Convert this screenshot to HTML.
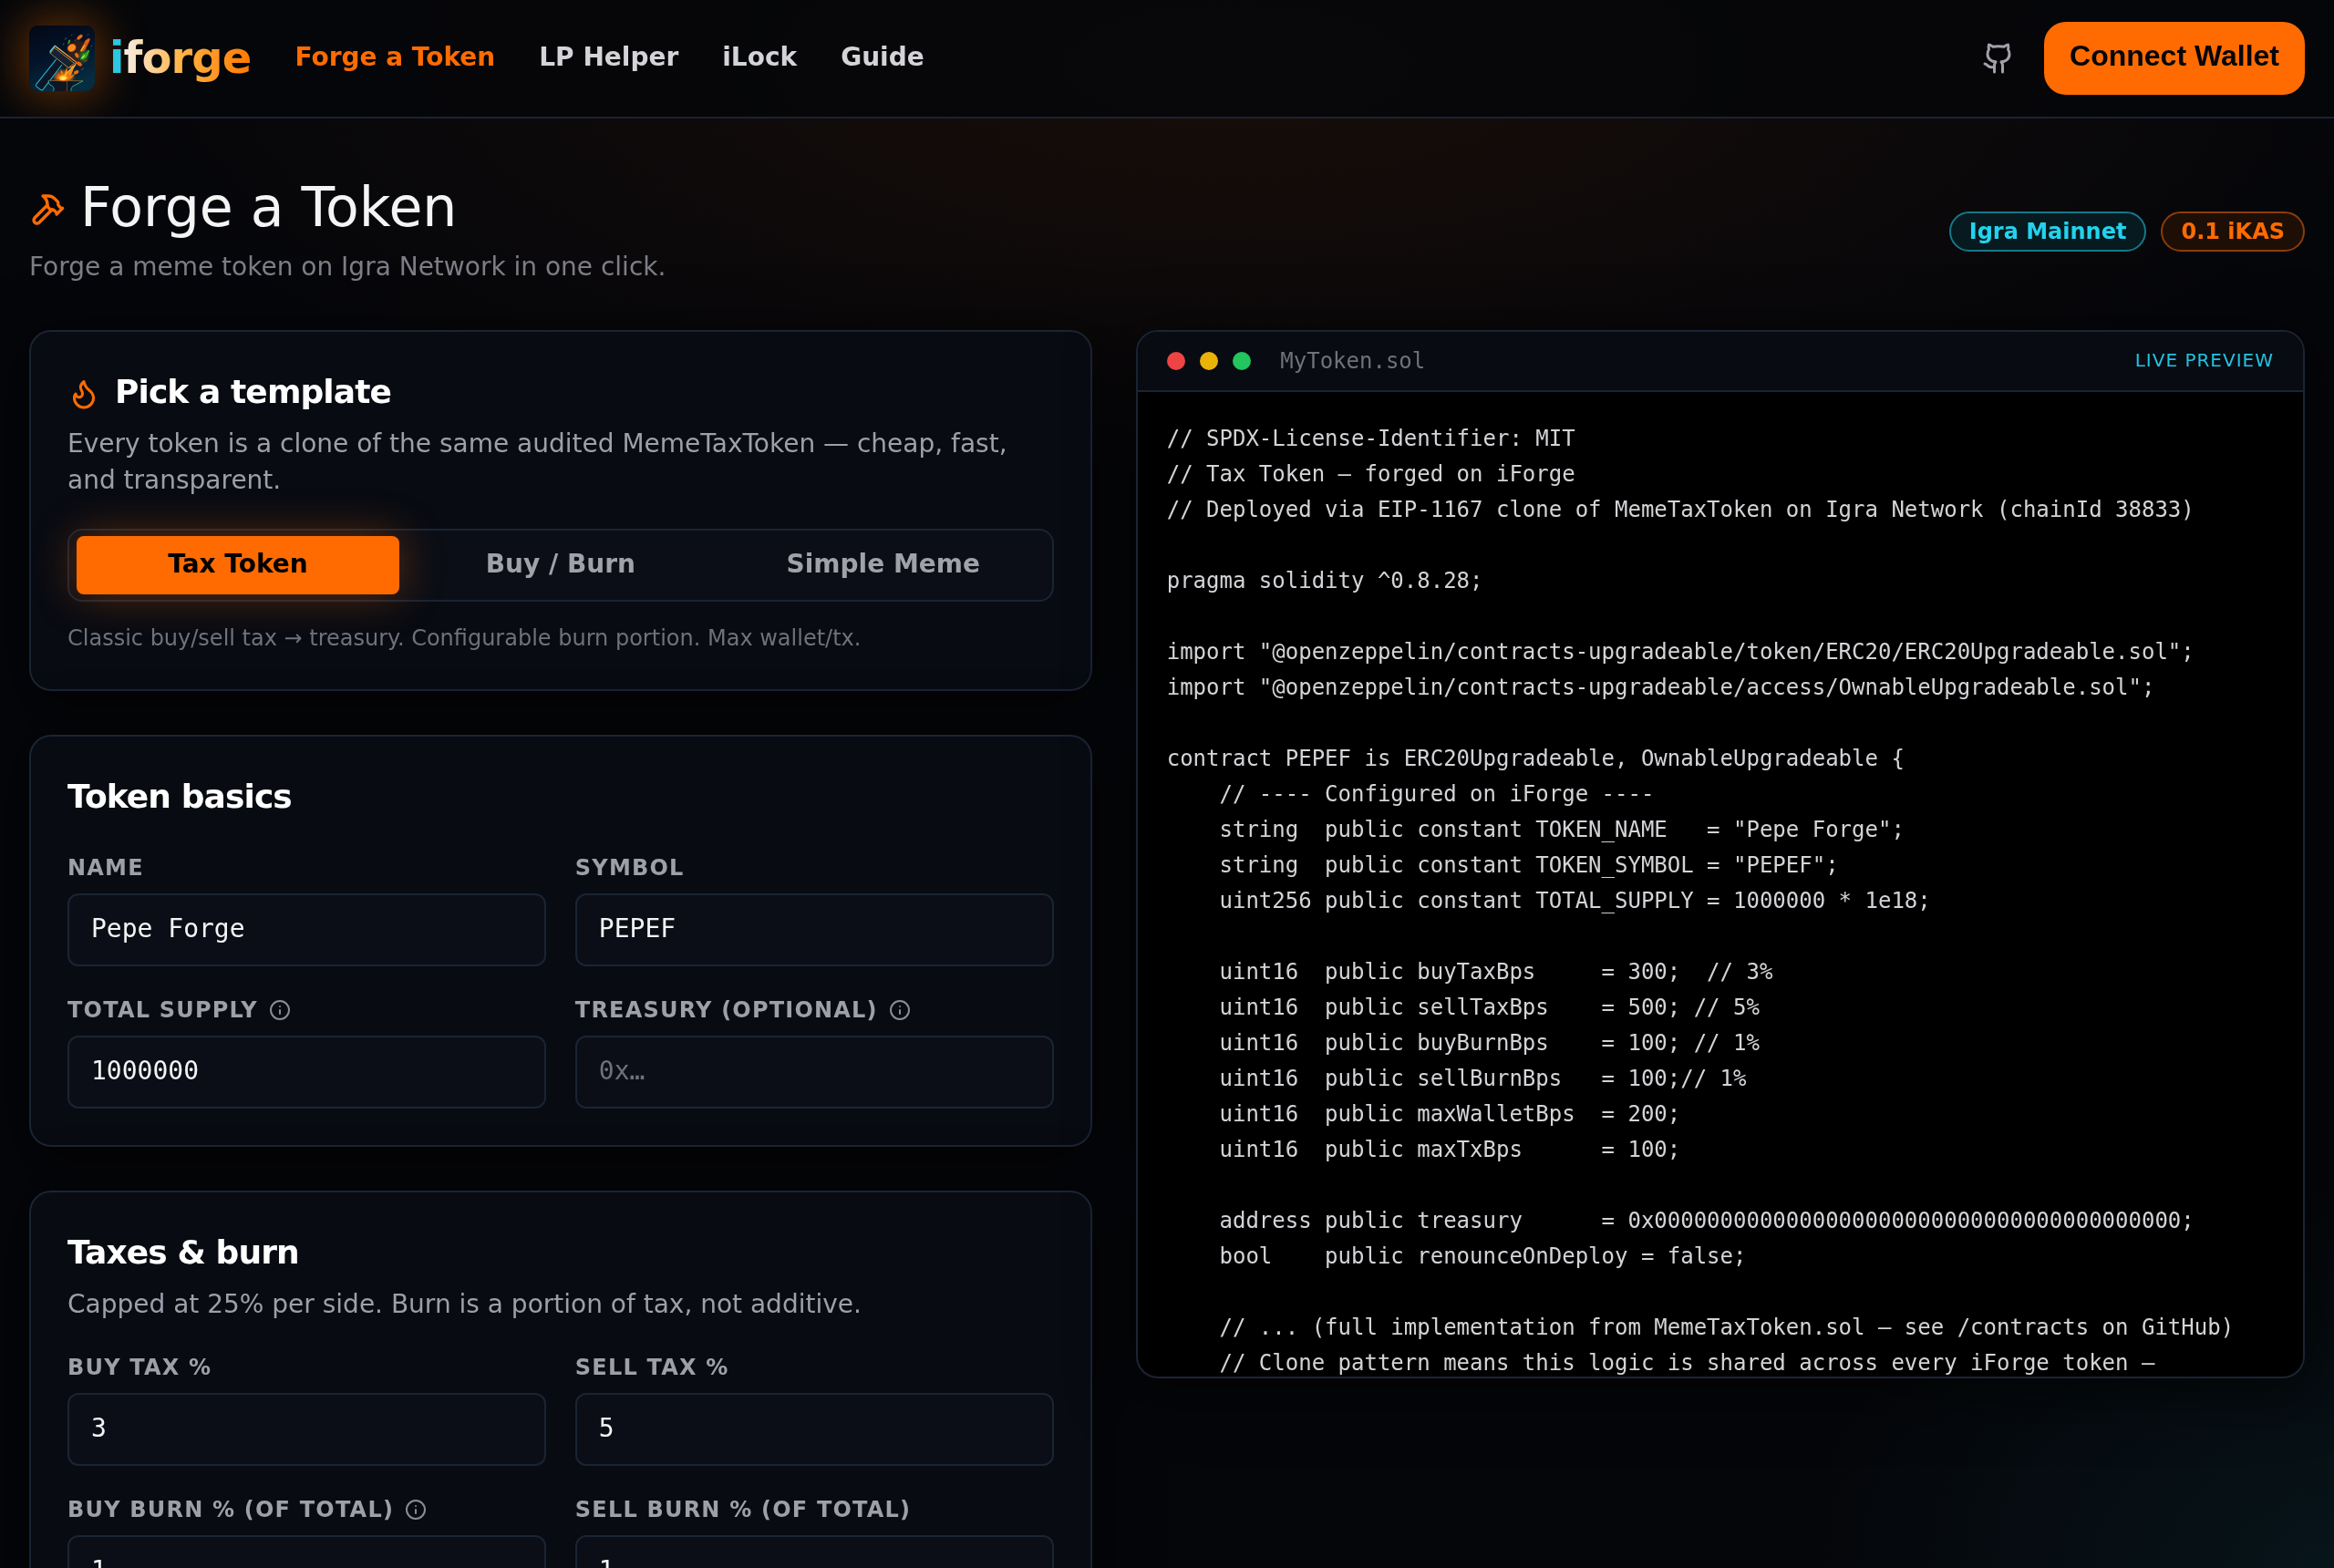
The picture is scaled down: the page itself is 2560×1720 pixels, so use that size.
<!DOCTYPE html>
<html lang="en">
<head>
<meta charset="utf-8">
<title>iForge — Forge a Token</title>
<style>
*{box-sizing:border-box;margin:0;padding:0}
html{background:#05060a;overflow:hidden}
:root{--brand:-.5px;--nav:-.5px;--h1:-.5px;--h2:0px;--cwpb:1px;--lp:.5px;--t14:0px}
@media (min-width:2000px){html{zoom:2}:root{--brand:-.5px;--nav:-.5px;--h1:-1.5px;--h2:-1.25px;--cwpb:3px;--lp:-.5px;--t14:-.5px}}
body{-webkit-font-smoothing:antialiased;width:1280px;height:860px;overflow:hidden;position:relative;background:#05060a;color:#f4f4f5;
 font-family:"DejaVu Sans","Liberation Sans",sans-serif;font-size:16px;line-height:24px}
.bgfx{position:absolute;inset:0;pointer-events:none;
 background:
  radial-gradient(ellipse 640px 230px at 53% 36px, rgba(255,107,0,.078) 0%, rgba(255,107,0,.052) 35%, rgba(255,107,0,.022) 68%, transparent 100%),
  radial-gradient(ellipse 420px 300px at 100% 100%, rgba(34,211,238,.07), transparent 70%);}
header{will-change:transform;overflow:hidden;position:absolute;left:0;top:0;width:1280px;height:65px;border-bottom:1px solid #1c2233;background:rgba(5,6,10,.82)}
.hin{width:1280px;padding:0 16px;height:64px;display:flex;align-items:center;justify-content:space-between}
.hl{display:flex;align-items:center}
.logo{width:36px;height:36px;border-radius:5px;display:block;box-shadow:0 0 24px 4px rgba(255,120,0,.35)}
.brand{font-weight:700;font-size:24px;line-height:32px;margin-left:8px;letter-spacing:-.46px;position:relative;top:var(--brand)}
.brand .i{color:#2ac8e2}
.brand .f{background:linear-gradient(90deg,#f6eee4 0%,#ffb347 45%,#ff7a00 100%);-webkit-background-clip:text;background-clip:text;color:transparent}
nav{position:relative;top:var(--nav);display:flex;margin-left:24px;font-size:14px;line-height:20px;font-weight:700}
nav a{color:#d4d4d8;margin-right:24px;text-decoration:none}
nav a.on{color:#ff6b00}
.hr{display:flex;align-items:center}
.gh{width:18px;height:18px;color:#a1a1aa;margin-right:16px;display:block}
.cw{font-family:"Liberation Sans",sans-serif;font-weight:700;font-size:16px;line-height:24px;color:#05060a;background:#ff6b00;border:0;border-radius:12px;height:40px;padding:0 14px var(--cwpb)}
main{will-change:transform;position:absolute;left:0;top:65px;width:1280px;padding:32px 16px 0}
.th{display:flex;justify-content:space-between;align-items:flex-end;margin-bottom:24px}
h1{font-size:30px;line-height:36px;font-weight:400;display:flex;align-items:center}
h1 span{position:relative;top:var(--h1)}
h1 svg{width:20px;height:20px;color:#ff6b00;margin-right:8px}
.sub{position:relative;top:var(--t14);font-size:14px;line-height:20px;color:#7d7d86;margin-top:4px}
.badges{display:flex;gap:8px;padding-bottom:19px}
.bd{font-size:12px;line-height:16px;font-weight:700;border-radius:999px;padding:2px 10px;border:1px solid}
.bd.c{color:#22d3ee;border-color:#15788a;background:#061a20}
.bd.o{color:#ff6b00;border-color:#8a3d08;background:#1d0f06}
.grid{display:grid;grid-template-columns:1fr 1.1fr;gap:24px;align-items:start}
.card{border:1px solid #1b2433;border-radius:12px;background:#080b12;box-shadow:0 6px 30px 6px rgba(0,0,0,.5);padding:20px;margin-bottom:24px}
h2{font-size:18px;line-height:28px;font-weight:700;color:#fff;letter-spacing:-.45px;display:flex;align-items:center}
h2 span{position:relative;top:var(--h2)}
h2 svg{width:18px;height:18px;color:#ff6b00;margin-right:8px}
.desc{position:relative;top:var(--t14);font-size:14px;line-height:20px;color:#9d9fa9;margin-top:4px}
.seg{margin-top:16px;border:1px solid #1b2433;border-radius:8px;padding:3px 4px;display:grid;grid-template-columns:1fr 1fr 1fr;background:#0b0e16}
.seg div{height:32px;line-height:calc(32px + 2*var(--t14));text-align:center;font-size:14px;font-weight:700;color:#a1a1aa;border-radius:4px}
.seg div.on{background:#ff6b00;color:#000;box-shadow:0 0 24px rgba(255,107,0,.35)}
.hint{font-size:12px;line-height:16px;color:#6f717c;margin-top:12px}
.fg{display:grid;grid-template-columns:1fr 1fr;column-gap:16px;row-gap:16px;margin-top:16px}
label{display:flex;align-items:center;font-size:12px;line-height:16px;font-weight:700;letter-spacing:.6px;color:#9d9fa9;text-transform:uppercase}
label svg{width:12px;height:12px;margin-left:6px;color:#8a8c96}
.in{margin-top:6px;height:40px;border:1px solid #1b2433;border-radius:6px;background:#0b0e16;padding:0 12px;font-family:"DejaVu Sans Mono","Liberation Mono",monospace;font-size:14px;line-height:calc(38px + 2*var(--t14));color:#f4f4f5}
.in.ph{color:#6f717c}
.code{border:1px solid #1b2433;border-radius:12px;background:#000;box-shadow:0 6px 30px 6px rgba(0,0,0,.5);overflow:hidden;height:575px}
.cbar{height:33px;border-bottom:1px solid #1b2433;background:#080b12;display:flex;align-items:center;padding:0 16px;justify-content:space-between}
.dots{display:flex;align-items:center}
.dots i{width:10px;height:10px;border-radius:50%;display:block;margin-right:8px}
.fn{font-family:"DejaVu Sans Mono","Liberation Mono",monospace;font-size:12px;line-height:16px;color:#6f717c;margin-left:8.3px}
.lp{position:relative;top:var(--lp);font-size:10px;line-height:15px;letter-spacing:.5px;color:#22c3e0;text-transform:uppercase}
pre{font-family:"DejaVu Sans Mono","Liberation Mono",monospace;font-size:12px;line-height:19.5px;color:#d4d4d8;padding:16px;white-space:pre}
</style>
</head>
<body>
<div class="bgfx"></div>
<header><div class="hin">
 <div class="hl">
  <svg class="logo" viewBox="0 0 72 72"><defs><linearGradient id="lgbg" x1="0" y1="0" x2="0.35" y2="1"><stop offset="0" stop-color="#030716"/><stop offset=".55" stop-color="#04142a"/><stop offset="1" stop-color="#062c40"/></linearGradient><radialGradient id="lgsp" cx=".5" cy=".5" r=".5"><stop offset="0" stop-color="#fff27a"/><stop offset=".35" stop-color="#ffb21e"/><stop offset=".7" stop-color="#f2620c" stop-opacity=".75"/><stop offset="1" stop-color="#c43c06" stop-opacity="0"/></radialGradient><linearGradient id="lghd" x1="0" y1="0" x2="1" y2="0"><stop offset="0" stop-color="#3cc0d8"/><stop offset=".3" stop-color="#f0c060"/><stop offset="1" stop-color="#ff7a14"/></linearGradient><filter id="lgb" x="-20%" y="-20%" width="140%" height="140%"><feGaussianBlur stdDeviation=".55"/></filter><filter id="lgb2" x="-30%" y="-30%" width="160%" height="160%"><feGaussianBlur stdDeviation="1.6"/></filter><clipPath id="lgc"><rect width="72" height="72"/></clipPath></defs><g clip-path="url(#lgc)"><rect width="72" height="72" fill="url(#lgbg)"/><g filter="url(#lgb2)" opacity=".55"> <ellipse cx="38" cy="56" rx="11" ry="7" fill="#ff8a10"/> <ellipse cx="53" cy="30" rx="11" ry="14" fill="#a63a06" opacity=".5"/> <ellipse cx="60" cy="33" rx="5" ry="6" fill="#2f9a1c"/></g><g filter="url(#lgb)"> <!-- handle --> <path d="M29.6 37.2 7.9 64.4a2 2 0 0 0 .3 2.7l4.3 3.3a2 2 0 0 0 2.7-.3L35.9 43" fill="#081428" stroke="#2bb3d2" stroke-width="1.05" stroke-linejoin="round"/> <!-- head --> <path d="M28.3 22.2 51.7 40.3 50 44 43.5 46.2 23.3 30.4 23 28.5Z" fill="#0c1829" stroke="url(#lghd)" stroke-width="1.2" stroke-linejoin="round"/> <path d="M23.3 30.4 43.5 46.2 49.6 41.4 27.6 24.3Z" fill="#182233" stroke="none"/><path d="M27.6 24.3 49.6 41.4M27.6 24.3 23.3 30.4M49.6 41.4 43.5 46.2" fill="none" stroke="#f0a848" stroke-width=".75" stroke-linejoin="round"/> <path d="M23 28.5 28.3 22.2" stroke="#49c6d8" stroke-width="1.1" fill="none"/> <!-- anvil --> <path d="M21 60.3 59 60.8 48 66.5 46 69 46.5 72 26 72 27.5 68 25 65.5 22 64Z" fill="#0a1420"/> <path d="M21 60.3 59 60.8" stroke="#8a6a3a" stroke-width=".9"/> <path d="M21 60.3 22 64c1 2 3.5 1.5 4.5 3.5s1 3.5-.5 4.5" fill="none" stroke="#2bb3d2" stroke-width=".9"/> <path d="M59 60.8 48 66.5c-1.5 1-2.5 3-2 5.5" fill="none" stroke="#2ab89a" stroke-width=".9"/> <path d="M41.5 61 41.3 72" stroke="#7a4a22" stroke-width=".9"/> <!-- spark burst --> <path d="M35.5 59 34.5 47.5 38 54 41.5 45.5 41.8 54 51.5 41.5 45 56 51 52.5 44.5 59.5Z" fill="#ff8a12"/> <path d="M30.5 58.8 32 52 34 57 37 50 38 57.5Z" fill="#f26a0c"/> <ellipse cx="37.5" cy="57" rx="9" ry="5.2" fill="url(#lgsp)"/> <path d="M36 58 50 43.5" stroke="#ffb624" stroke-width="1.6" stroke-linecap="round"/> <ellipse cx="37" cy="58" rx="3.6" ry="1.9" fill="#ffe95a"/> <!-- coins --> <ellipse cx="46.7" cy="24.5" rx="5" ry="4.2" transform="rotate(-35 46.7 24.5)" fill="#e8660e"/> <ellipse cx="46.7" cy="24.5" rx="3.3" ry="2.6" transform="rotate(-35 46.7 24.5)" fill="#f58a1a" stroke="#ffb040" stroke-width=".6"/> <ellipse cx="55.5" cy="12.7" rx="3.7" ry="1.9" transform="rotate(-42 55.5 12.7)" fill="#ea6a10"/> <ellipse cx="59.2" cy="26.2" rx="3.4" ry="1.5" transform="rotate(-35 59.2 26.2)" fill="#e8640e" stroke="#b84a08" stroke-width=".4"/><ellipse cx="60.4" cy="23.8" rx="3.4" ry="1.5" transform="rotate(-35 60.4 23.8)" fill="#e8640e" stroke="#b84a08" stroke-width=".4"/><ellipse cx="61.6" cy="21.4" rx="3.4" ry="1.5" transform="rotate(-35 61.6 21.4)" fill="#e8640e" stroke="#b84a08" stroke-width=".4"/><ellipse cx="62.8" cy="19" rx="3.4" ry="1.5" transform="rotate(-35 62.8 19)" fill="#e8640e" stroke="#b84a08" stroke-width=".4"/><ellipse cx="63.8" cy="16.8" rx="3.4" ry="1.5" transform="rotate(-35 63.8 16.8)" fill="#e8640e" stroke="#b84a08" stroke-width=".4"/> <path d="M57 27.5 60.5 22" stroke="#ffc234" stroke-width="1.2" stroke-linecap="round"/> <ellipse cx="52.3" cy="32.7" rx="1.9" ry="3" transform="rotate(-25 52.3 32.7)" fill="#e06a12"/> <ellipse cx="55" cy="42.2" rx="3.2" ry="2" transform="rotate(35 55 42.2)" fill="#e4620e"/> <ellipse cx="51.7" cy="51.2" rx="2.9" ry="1.9" transform="rotate(-25 51.7 51.2)" fill="#ea6e10"/> <path d="M60.5 39.5 63.5 38M57.5 48.5 59.5 47" stroke="#b0481a" stroke-width=".9" stroke-linecap="round"/> <!-- green shards --> <path d="M42 20.5 43.5 16 45.5 15.5 44.2 19.5Z" fill="#3fae28"/> <path d="M56 37 59 31 62 30.5 64.5 27 66.5 27.5 64 33 62.5 35.5 59 37.5Z" fill="#36a822"/> <path d="M58 35.5 60.5 33.2" stroke="#b6ee4a" stroke-width="1.2" stroke-linecap="round"/> <path d="M39.5 15.5 40.5 13.5M46 11 47 10M64 10.5 65 9.5M68 23 68.8 22M37.5 21 38 19.5M50.5 16.5 51 15.5" stroke="#5a7a4a" stroke-width=".7" stroke-linecap="round"/></g></g></svg>
  <span class="brand"><span class="i">i</span><span class="f">forge</span></span>
  <nav><a class="on">Forge a Token</a><a>LP Helper</a><a>iLock</a><a>Guide</a></nav>
 </div>
 <div class="hr">
  <svg class="gh" viewBox="0 0 24 24" fill="none" stroke="currentColor" stroke-width="2" stroke-linecap="round" stroke-linejoin="round"><path d="M15 22v-4a4.8 4.8 0 0 0-1-3.5c3 0 6-2 6-5.5.08-1.25-.27-2.48-1-3.5.28-1.15.28-2.35 0-3.5 0 0-1 0-3 1.5-2.64-.5-5.36-.5-8 0C6 2 5 2 5 2c-.3 1.15-.3 2.35 0 3.5A5.403 5.403 0 0 0 4 9c0 3.5 3 5.5 6 5.5-.39.49-.68 1.05-.85 1.65-.17.6-.22 1.23-.15 1.85v4"/><path d="M9 18c-4.510 2-5-2-7-2"/></svg>
  <button class="cw">Connect Wallet</button>
 </div>
</div></header>
<main>
 <div class="th">
  <div>
   <h1><svg viewBox="0 0 24 24" fill="none" stroke="currentColor" stroke-width="2" stroke-linecap="round" stroke-linejoin="round"><path d="m15 12-8.373 8.373a1 1 0 1 1-3-3L12 9"/><path d="m18 15 4-4"/><path d="m21.5 11.5-1.914-1.914A2 2 0 0 1 19 8.172V7l-2.26-2.26a6 6 0 0 0-4.202-1.756L9 2.96l.92.82A6.18 6.18 0 0 1 12 8.4V10l2 2h1.172a2 2 0 0 1 1.414.586L18.5 14.5"/></svg><span>Forge a Token</span></h1>
   <div class="sub">Forge a meme token on Igra Network in one click.</div>
  </div>
  <div class="badges"><span class="bd c">Igra Mainnet</span><span class="bd o">0.1 iKAS</span></div>
 </div>
 <div class="grid">
  <div>
   <div class="card">
    <h2><svg viewBox="0 0 24 24" fill="none" stroke="currentColor" stroke-width="2" stroke-linecap="round" stroke-linejoin="round"><path d="M8.5 14.5A2.5 2.5 0 0 0 11 12c0-1.38-.5-2-1-3-1.072-2.143-.224-4.054 2-6 .5 2.5 2 4.9 4 6.5 2 1.6 3 3.5 3 5.5a7 7 0 1 1-14 0c0-1.153.433-2.294 1-3a2.5 2.5 0 0 0 2.5 2.5z"/></svg><span>Pick a template</span></h2>
    <div class="desc">Every token is a clone of the same audited MemeTaxToken — cheap, fast, and transparent.</div>
    <div class="seg"><div class="on">Tax Token</div><div>Buy / Burn</div><div>Simple Meme</div></div>
    <div class="hint">Classic buy/sell tax → treasury. Configurable burn portion. Max wallet/tx.</div>
   </div>
   <div class="card">
    <h2><span>Token basics</span></h2>
    <div class="fg">
     <div><label>Name</label><div class="in">Pepe Forge</div></div>
     <div><label>Symbol</label><div class="in">PEPEF</div></div>
     <div><label>Total supply<svg viewBox="0 0 24 24" fill="none" stroke="currentColor" stroke-width="2" stroke-linecap="round" stroke-linejoin="round"><circle cx="12" cy="12" r="10"/><path d="M12 16v-4"/><path d="M12 8h.01"/></svg></label><div class="in">1000000</div></div>
     <div><label>Treasury (optional)<svg viewBox="0 0 24 24" fill="none" stroke="currentColor" stroke-width="2" stroke-linecap="round" stroke-linejoin="round"><circle cx="12" cy="12" r="10"/><path d="M12 16v-4"/><path d="M12 8h.01"/></svg></label><div class="in ph">0x…</div></div>
    </div>
   </div>
   <div class="card">
    <h2><span>Taxes &amp; burn</span></h2>
    <div class="desc">Capped at 25% per side. Burn is a portion of tax, not additive.</div>
    <div class="fg">
     <div><label>Buy tax %</label><div class="in">3</div></div>
     <div><label>Sell tax %</label><div class="in">5</div></div>
     <div><label>Buy burn % (of total)<svg viewBox="0 0 24 24" fill="none" stroke="currentColor" stroke-width="2" stroke-linecap="round" stroke-linejoin="round"><circle cx="12" cy="12" r="10"/><path d="M12 16v-4"/><path d="M12 8h.01"/></svg></label><div class="in">1</div></div>
     <div><label>Sell burn % (of total)</label><div class="in">1</div></div>
    </div>
   </div>
  </div>
  <div class="code">
   <div class="cbar"><div class="dots"><i style="background:#ef4444"></i><i style="background:#eab308"></i><i style="background:#22c55e"></i><span class="fn">MyToken.sol</span></div><span class="lp">Live preview</span></div>
<pre>// SPDX-License-Identifier: MIT
// Tax Token — forged on iForge
// Deployed via EIP-1167 clone of MemeTaxToken on Igra Network (chainId 38833)

pragma solidity ^0.8.28;

import "@openzeppelin/contracts-upgradeable/token/ERC20/ERC20Upgradeable.sol";
import "@openzeppelin/contracts-upgradeable/access/OwnableUpgradeable.sol";

contract PEPEF is ERC20Upgradeable, OwnableUpgradeable {
    // ---- Configured on iForge ----
    string  public constant TOKEN_NAME   = "Pepe Forge";
    string  public constant TOKEN_SYMBOL = "PEPEF";
    uint256 public constant TOTAL_SUPPLY = 1000000 * 1e18;

    uint16  public buyTaxBps     = 300;  // 3%
    uint16  public sellTaxBps    = 500; // 5%
    uint16  public buyBurnBps    = 100; // 1%
    uint16  public sellBurnBps   = 100;// 1%
    uint16  public maxWalletBps  = 200;
    uint16  public maxTxBps      = 100;

    address public treasury      = 0x0000000000000000000000000000000000000000;
    bool    public renounceOnDeploy = false;

    // ... (full implementation from MemeTaxToken.sol — see /contracts on GitHub)
    // Clone pattern means this logic is shared across every iForge token —
    // only state differs. Verified source on the Igra explorer.
}</pre>
  </div>
 </div>
</main>
<script>(function(){var w=window.innerWidth||1280;if(w<2000&&Math.abs(w-1280)>8){document.documentElement.style.zoom=w/1280;}})();</script>
</body>
</html>
